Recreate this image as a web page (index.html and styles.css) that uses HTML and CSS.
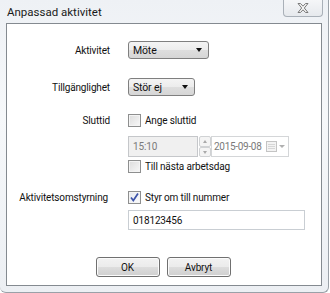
FILE: index.html
```
<!DOCTYPE html>
<html>
<head>
<meta charset="utf-8">
<link rel="stylesheet" href="styles.css">
</head>
<body>
<div class="window">
  <div class="titlebar">
    <span class="title">Anpassad aktivitet</span>
    <div class="close">
      <svg width="14" height="12" viewBox="0 0 14 12"><path d="M2 1.5h2.5L7 4.2 9.5 1.5H12L8.3 6 12 10.5H9.5L7 7.8 4.5 10.5H2L5.7 6z" fill="#f4f4f4" stroke="#7a7a7a" stroke-width="1" stroke-linejoin="round"/></svg>
    </div>
  </div>
  <div class="client">
    <div class="row r1">
      <div class="label">Aktivitet</div>
      <div class="ctrl"><div class="select w80"><span>Möte</span><i class="arrow"></i></div></div>
    </div>
    <div class="row r2">
      <div class="label">Tillgänglighet</div>
      <div class="ctrl"><div class="select w66"><span>Stör ej</span><i class="arrow"></i></div></div>
    </div>
    <div class="row r3">
      <div class="label">Sluttid</div>
      <div class="ctrl"><span class="cb"></span><span class="cbtext">Ange sluttid</span></div>
    </div>
    <div class="row r4">
      <div class="label"></div>
      <div class="ctrl">
        <div class="time">15:10</div>
        <div class="spin"><i class="up"></i><i class="down"></i></div>
        <div class="date"><span>2015-09-08</span>
          <svg class="cal" width="11" height="11" viewBox="0 0 11 11"><rect x="0.5" y="0.5" width="10" height="10" fill="#f3f3f3" stroke="#c4c4c4"/><path d="M2 3.5h7M2 5.5h7M2 7.5h7" stroke="#d6d6d6"/></svg>
          <i class="darrow"></i>
        </div>
      </div>
    </div>
    <div class="row r5">
      <div class="label"></div>
      <div class="ctrl"><span class="cb"></span><span class="cbtext">Till nästa arbetsdag</span></div>
    </div>
    <div class="row r6">
      <div class="label">Aktivitetsomstyrning</div>
      <div class="ctrl"><span class="cb checked"><svg width="11" height="11" viewBox="0 0 11 11"><path d="M2 5.5l2.3 3L9 1.5" fill="none" stroke="#3b52a8" stroke-width="1.7"/></svg></span><span class="cbtext">Styr om till nummer</span></div>
    </div>
    <div class="row r7">
      <div class="label"></div>
      <div class="ctrl"><div class="textinput">018123456</div></div>
    </div>
    <div class="buttons">
      <div class="btn">OK</div>
      <div class="btn">Avbryt</div>
    </div>
  </div>
</div>
</body>
</html>
```
FILE: styles.css
```
html, body { margin: 0; padding: 0; }
body {
  width: 330px; height: 293px; overflow: hidden;
  font-family: "Roboto", "Liberation Sans", sans-serif;
  font-size: 10px; letter-spacing: -0.15px; color: #111;
  background: #fff;
}
.window {
  width: 328px; height: 292px;
  border: 1px solid #9aa1a8;
  border-top: none; border-left: none;
  border-radius: 0 0 6px 6px;
  background: linear-gradient(to bottom, #eef1f5, #f6f8fa 40%, #eceff3);
  display: flex; flex-direction: column;
}
.titlebar {
  height: 23px; display: flex; align-items: flex-start;
  position: relative;
}
.title { margin: 5px 0 0 7px; font-size: 11.5px; letter-spacing: 0; color: #1a1a1a; }
.close {
  position: absolute; left: 283px; top: -1px;
  width: 38px; height: 17px;
  border: 1px solid #a9b0b8; border-top: none;
  border-radius: 0 0 4px 4px;
  background: linear-gradient(to bottom, #f6f7f9, #e6e9ed);
  display: flex; align-items: center; justify-content: center;
}
.client {
  margin: 0 6px 0 6px;
  height: 261px;
  border: 1px solid #848a90;
  background: #fff;
  display: flex; flex-direction: column;
}
.row { display: grid; grid-template-columns: 103px 1fr; column-gap: 18px; align-items: center; }
.label { text-align: right; white-space: nowrap; }
.ctrl { display: flex; align-items: center; }
.r1 { margin-top: 17px; height: 18px; }
.r2 { margin-top: 19px; height: 18px; }
.r3 { margin-top: 17px; height: 14px; }
.r4 { margin-top: 9px; height: 21px; }
.r5 { margin-top: 2px; height: 14px; }
.r6 { margin-top: 17px; height: 14px; }
.r7 { margin-top: 6px; height: 20px; }
.r6 .label { padding-right: 2px; }
.select {
  box-sizing: border-box; height: 18px;
  border: 1px solid #7f7f7f; border-radius: 3px;
  background: linear-gradient(to bottom, #f4f4f4 0%, #ececec 50%, #dedede 51%, #d6d6d6 100%);
  display: flex; align-items: center; justify-content: space-between;
  padding: 0 6px 0 4px;
  font-size: 10.5px;
}
.w80 { width: 81px; }
.w66 { width: 67px; }
.arrow {
  width: 0; height: 0;
  border-left: 3.5px solid transparent; border-right: 3.5px solid transparent;
  border-top: 4px solid #111;
}
.cb {
  width: 13px; height: 13px; box-sizing: border-box;
  border: 1px solid #8e8f8f;
  background: linear-gradient(135deg, #dcdcdc, #f8f8f8);
  box-shadow: inset 0 0 0 1px #f4f4f4;
  display: inline-flex; align-items: center; justify-content: center;
}
.cb.checked { background: linear-gradient(135deg, #e4e8ee, #fbfbfc); }
.cbtext { margin-left: 4px; }
.time {
  width: 70px; height: 21px; box-sizing: border-box;
  border: 1px solid #c5c7ca; background: #f0f0f0;
  color: #7a7a7a; padding-left: 4px; display: flex; align-items: center;
}
.spin {
  width: 12px; height: 21px; box-sizing: border-box; margin-left: 1px;
  display: flex; flex-direction: column;
}
.spin i {
  flex: 1; border: 1px solid #d0d2d4; background: #f4f4f4; position: relative;
  border-radius: 2px;
}
.spin .up::after, .spin .down::after {
  content: ""; position: absolute; left: 3px; top: 3px;
  border-left: 2.5px solid transparent; border-right: 2.5px solid transparent;
}
.spin .up::after { border-bottom: 3px solid #a9a9a9; }
.spin .down::after { border-top: 3px solid #a9a9a9; top: 3px; }
.date {
  width: 78px; height: 21px; box-sizing: border-box;
  border: 1px solid #d4d6d8; background: #fff; color: #7a7a7a;
  display: flex; align-items: center; padding-left: 2px;
}
.date span { flex: 1; white-space: nowrap; letter-spacing: -0.3px; }
.cal { margin-right: 2px; flex: none; }
.darrow {
  width: 0; height: 0; margin-right: 3px;
  border-left: 3px solid transparent; border-right: 3px solid transparent;
  border-top: 3px solid #b0b0b0;
}
.textinput {
  width: 177px; height: 20px; box-sizing: border-box;
  border: 1px solid #c9ced3; padding-left: 4px;
  display: flex; align-items: center;
}
.buttons { display: flex; justify-content: center; gap: 7px; margin-top: 27px; padding-right: 2px; }
.btn {
  width: 64px; height: 20px; box-sizing: border-box;
  border: 1px solid #707070; border-radius: 3px;
  background: linear-gradient(to bottom, #f2f2f2 0%, #ebebeb 50%, #dddddd 51%, #cfcfcf 100%);
  box-shadow: inset 0 0 0 1px #fbfbfb;
  display: flex; align-items: center; justify-content: center;
}
```
